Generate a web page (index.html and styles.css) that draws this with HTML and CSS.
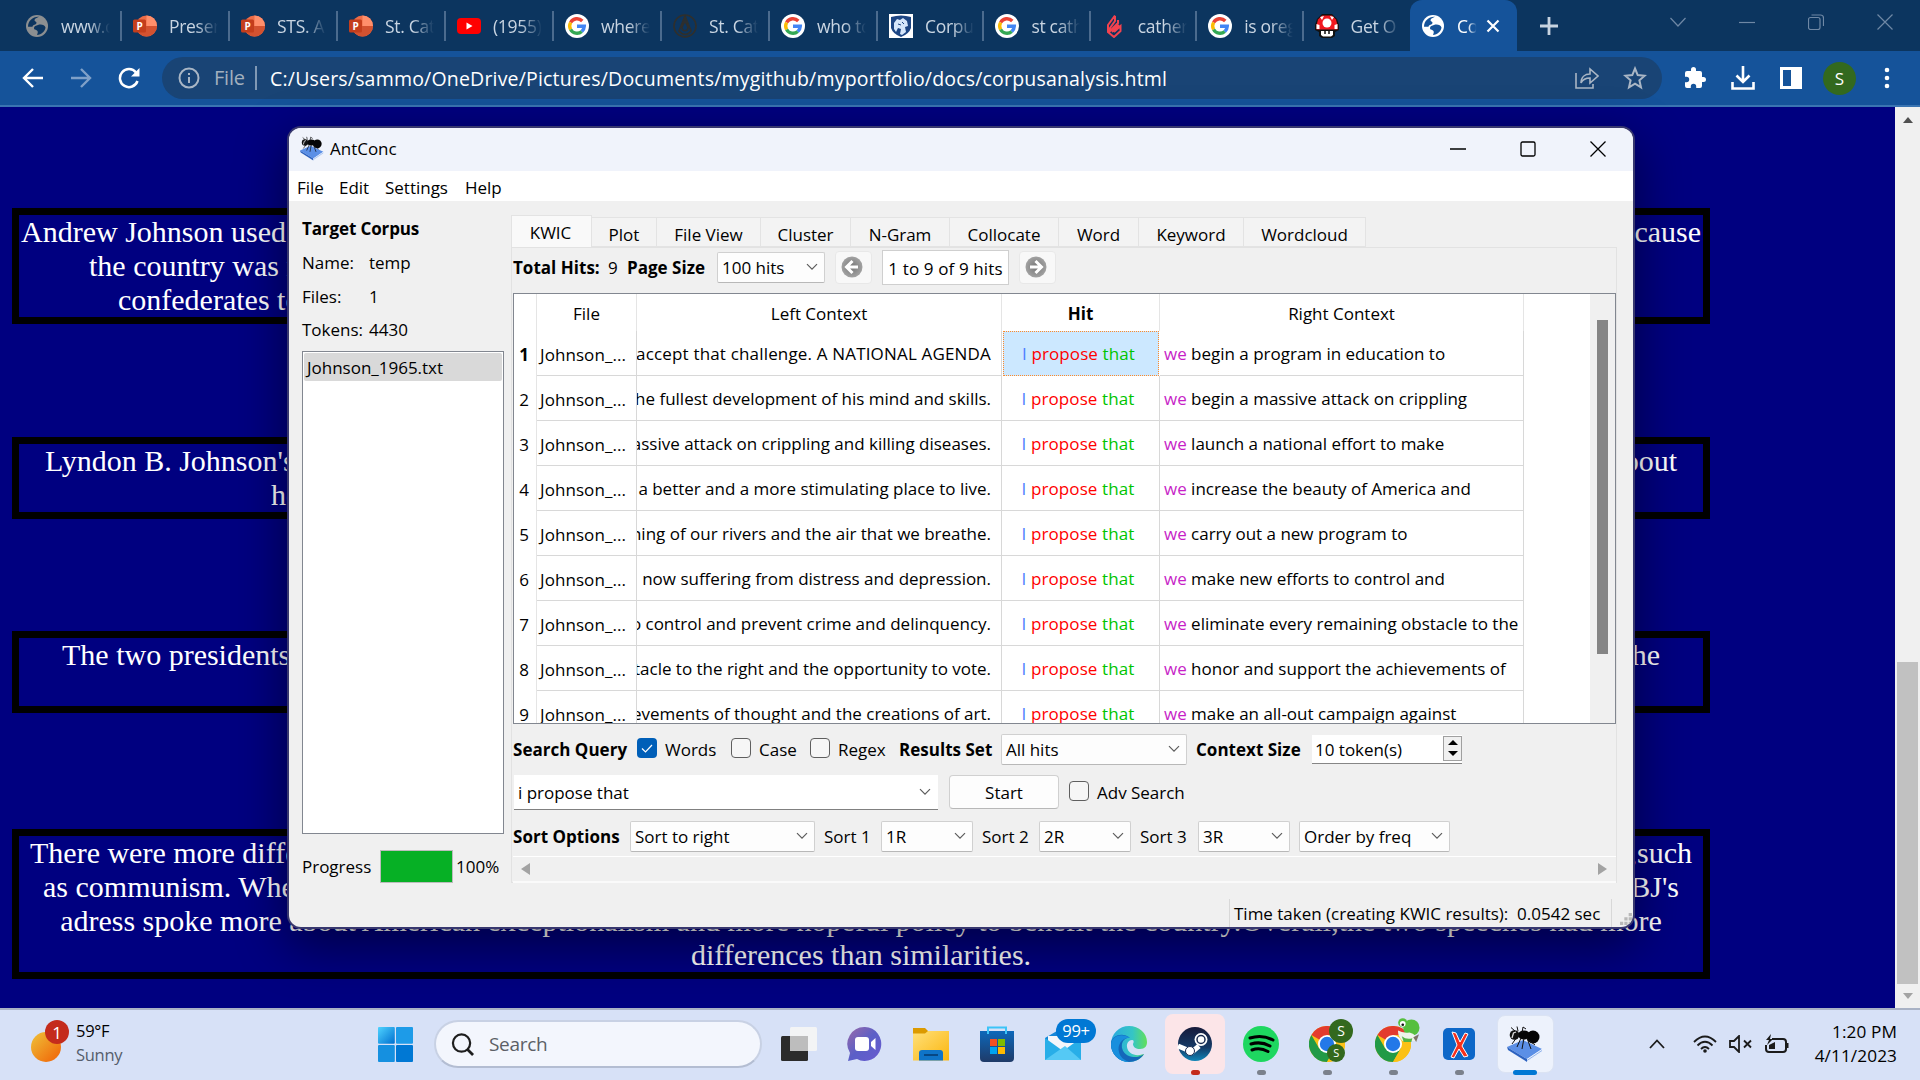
FILE: index.html
```html
<!DOCTYPE html>
<html lang="en">
<head>
<meta charset="utf-8">
<title>Corpus Analysis</title>
<link rel="stylesheet" href="styles.css">
</head>
<body>
<svg class="defs" width="0" height="0">
  <defs>
    <linearGradient id="gWin" x1="0" y1="0" x2="1" y2="1"><stop offset="0" stop-color="#4fd3ff"/><stop offset="1" stop-color="#0070d0"/></linearGradient>
    <linearGradient id="gSun" x1="0" y1="0" x2="1" y2="1"><stop offset="0" stop-color="#efc33a"/><stop offset=".8" stop-color="#f0730f"/></linearGradient>
    <linearGradient id="gChat" x1="0" y1="0" x2="1" y2="1"><stop offset="0" stop-color="#9a6aa8"/><stop offset=".5" stop-color="#5b5fc7"/><stop offset="1" stop-color="#6a5bd0"/></linearGradient>
    <linearGradient id="gFold" x1="0" y1="0" x2="1" y2="1"><stop offset="0" stop-color="#ffe07a"/><stop offset="1" stop-color="#fbb60e"/></linearGradient>
    <linearGradient id="gStore" x1="0" y1="0" x2="0" y2="1"><stop offset="0" stop-color="#0d68ba"/><stop offset="1" stop-color="#1f3a68"/></linearGradient>
    <linearGradient id="gEdge" x1="0" y1="0" x2="1" y2="0"><stop offset="0" stop-color="#2aa9e0"/><stop offset=".6" stop-color="#35c5c5"/><stop offset="1" stop-color="#62e05a"/></linearGradient>
    <linearGradient id="gSteam" x1="0" y1="0" x2="0" y2="1"><stop offset="0" stop-color="#171a3a"/><stop offset=".6" stop-color="#153a66"/><stop offset="1" stop-color="#0f86b8"/></linearGradient>
    <radialGradient id="gBall"><stop offset="0" stop-color="#777"/><stop offset="1" stop-color="#a2a2a2"/></radialGradient>
    <symbol id="ppt" viewBox="0 0 24 24"><circle cx="13.500" cy="12" r="10.500" fill="#ed6c47"/><path d="M13.500 1.500a10.500 10.500 0 0 1 10.500 10.500h-10.500z" fill="#ff8f6b"/><path d="M3 12a10.500 10.500 0 0 0 21 0z" fill="#d35230"/><rect y="5.500" width="13" height="13" rx="1.500" fill="#c43e1c"/><text x="3.500" y="16" class="ppt-p">P</text></symbol>
    <symbol id="google" viewBox="0 0 24 24"><circle cx="12" cy="12" r="12" fill="#fff"/><g fill="none" stroke-width="3.400"><path d="M17.300 7A7.300 7.300 0 0 0 5.600 8.500" stroke="#ea4335"/><path d="M5.600 8.500a7.300 7.300 0 0 0 0 7" stroke="#fbbc05"/><path d="M5.600 15.500a7.300 7.300 0 0 0 11.200 2" stroke="#34a853"/><path d="M16.800 17.500a7.300 7.300 0 0 0 2.500-5.200H12" stroke="#4285f4"/></g></symbol>
    <symbol id="globe" viewBox="0 0 24 24"><circle cx="12" cy="12" r="11" fill="currentColor"/><path d="M14 2.800c-2 1-4.500 1.500-4.500 3.500 0 1.500 2 1 2 2.500 0 2.500-4 1.500-4 4H3c0-6 5-10.500 11-10zM13 11c3-1 7 0 7.500 2.500-.5 4-4 7-8.500 7.500.5-2 1.500-3 0-4.500-1-1-3-.5-3-2.500 0-2 2-2.500 4-3z" fill="var(--cut)"/></symbol>
    <symbol id="chev" viewBox="0 0 12 8"><path d="M1 1.200l5 5 5-5" fill="none" stroke="#5c5c5c" stroke-width="1.200"/></symbol>
    <symbol id="chrome" viewBox="0 0 36 36"><circle cx="18" cy="18" r="18" fill="#fbc116"/><path d="M18 18L2.400 9A18 18 0 0 1 33.600 9H18z" fill="#e33b2e"/><path d="M18 18L10.200 22.500 2.400 9A18 18 0 0 0 18 36l7.800-13.500z" fill="#229a47"/><path d="M18 9h15.600A18 18 0 0 1 18 36l7.800-13.500z" fill="#fbc116"/><circle cx="18" cy="18" r="9" fill="#fff"/><circle cx="18" cy="18" r="7.200" fill="#2378e8"/></symbol>
    <symbol id="ant" viewBox="0 0 36 36"><path d="M0 21l16-7 19 9-15 10z" fill="#5b8fe6"/><path d="M0 21l20 12v3L1 24z" fill="#2c62c0"/><path d="M20 33l15-10v3L20 36z" fill="#e6eefc"/><path d="M20 34.500l15-10" stroke="#7fa4e4" stroke-width=".8"/><ellipse cx="26" cy="11" rx="6.500" ry="6.500" fill="#050505"/><ellipse cx="17" cy="9" rx="6" ry="4.500" fill="#050505"/><circle cx="7.500" cy="9" r="4.800" fill="#111"/><path d="M5 12l1.500-5 2.500-1" stroke="#ddd" fill="none" stroke-width="1.300"/><path d="M8 5L4 1.500M11 5l-1-4.500M14 12l-4 9M17 12l-2 11M20 12l4 11M19 12l9 7M10 11l-5 7M15 7l1-6 3 2" stroke="#111" stroke-width="1" fill="none"/></symbol>
  </defs>
</svg>

<main class="browser">
  <header class="tabstrip">
    <div class="tab first dim"><svg class="fav" style="--cut:#0c355f"><use href="#globe"/></svg><span>www.c</span></div>
    <div class="tab"><svg class="fav"><use href="#ppt"/></svg><span>Presen</span></div>
    <div class="tab"><svg class="fav"><use href="#ppt"/></svg><span>STS. A</span></div>
    <div class="tab"><svg class="fav"><use href="#ppt"/></svg><span>St. Cat</span></div>
    <div class="tab"><svg class="fav" viewBox="0 0 24 24"><rect y="4" width="24" height="16" rx="4" fill="#f00"/><path d="M9.500 8.500l6 3.500-6 3.500z" fill="#fff"/></svg><span>(1955)</span></div>
    <div class="tab"><svg class="fav"><use href="#google"/></svg><span>where</span></div>
    <div class="tab"><svg class="fav" viewBox="0 0 24 24" fill="none" stroke="#2f2f2c" stroke-width="1.600"><circle cx="12" cy="12" r="11"/><path d="M12 2L6 17c4 5 9 4 12 0L12 2v5l-3 6c0 5 6 5 6 0l-3-6"/></svg><span>St. Cat</span></div>
    <div class="tab"><svg class="fav"><use href="#google"/></svg><span>who to</span></div>
    <div class="tab"><svg class="fav" viewBox="0 0 24 24"><path fill="#fff" d="M0 0h24v24H0z"/><path d="M2 3q10-3 20 0v11q-2 6-10 9Q4 20 2 14z" fill="#1d4583"/><path d="M5 9l3-4 3 1 3-2 4 3 1 5-3 1 1 5-4 3-2-1 1-5-3-1-2 4-2-3z" fill="#d6e6fa"/><path d="M9 10l3 1M13 8l2 2" stroke="#1d4583"/></svg><span>Corpu</span></div>
    <div class="tab"><svg class="fav"><use href="#google"/></svg><span>st cath</span></div>
    <div class="tab"><svg class="fav" viewBox="0 0 24 24" fill="none" stroke="#f2434f" stroke-width="2"><path d="M13 1.500L6 11v7l6 5 6.500-6v-5L12 18M13 2v5l-5 7v3l8-8v-3M10 18l7-7"/></svg><span>cather</span></div>
    <div class="tab"><svg class="fav"><use href="#google"/></svg><span>is oreg</span></div>
    <div class="tab"><svg class="fav" viewBox="0 0 24 24"><path d="M7 0h10l5 5 2 6v5l-4 2v4l-3 2H7l-3-2v-4l-4-2v-5l2-6z" fill="#111"/><path d="M7 1.500h10l4 4 1.500 6v4H1.500v-4l1.500-6z" fill="#f01820"/><circle cx="12" cy="9" r="4.500" fill="#fff"/><path d="M5 3l4-1-2 4zM19 3l-4-1 2 4zM1.500 10l3 1v4h-3zM22.500 10l-3 1v4h3zM6 17h12v4l-2 1.500H8L6 21z" fill="#fff"/><path d="M10 17v3M14 17v3" stroke="#111" stroke-width="1.500"/></svg><span>Get O</span></div>
    <div class="tab active"><svg class="fav" style="--cut:#15539a"><use href="#globe"/></svg><span>Co</span><svg class="x" viewBox="0 0 14 14"><path d="M1.500 1.500l11 11M12.500 1.500l-11 11" stroke="#fff" stroke-width="2.200"/></svg></div>
    <svg class="plus" viewBox="0 0 18 18"><path d="M9 0v18M0 9h18" stroke="#c7d3e0" stroke-width="2.800"/></svg>
    <div class="syscontrols">
      <svg viewBox="0 0 16 16"><path d="M.5 4l7.500 8 7.500-8" /></svg>
      <svg viewBox="0 0 16 16"><path d="M0 8.500h16"/></svg>
      <svg viewBox="0 0 16 16"><rect x=".5" y="3.500" width="11.500" height="12" rx="2"/><path d="M3.500 1h9q3 0 3 3v8"/></svg>
      <svg viewBox="0 0 16 16"><path d="M.5.5l15 15M15.500.5l-15 15"/></svg>
    </div>
  </header>

  <nav class="toolbar">
    <svg class="nav" viewBox="0 0 22 22"><path d="M21 11H2.500M11 2l-9 9 9 9" stroke="#fff"/></svg>
    <svg class="nav" viewBox="0 0 22 22"><path d="M1 11h18.500M11 2l9 9-9 9" stroke="#7fa0c8"/></svg>
    <svg class="nav reload" viewBox="0 0 22 22"><path d="M19.500 14a9 9 0 1 1-1.500-8.500" stroke="#fff" stroke-width="2.500"/><path d="M21.500 1v8.500h-8.500z" fill="#fff" stroke="none"/></svg>
    <div class="omnibox">
      <svg class="info" viewBox="0 0 22 22"><circle cx="11" cy="11" r="9.500"/><path d="M11 10v6M11 6v2"/></svg>
      <span class="scheme">File</span>
      <span class="url">C:/Users/sammo/OneDrive/Pictures/Documents/mygithub/myportfolio/docs/corpusanalysis.html</span>
      <svg class="share" viewBox="0 0 24 24"><path d="M1 7v15h17v-4M6 17c0-6 4-9 9-9V3l8 7-8 7v-5c-4 0-7 1-9 5z"/></svg>
      <svg class="star" viewBox="0 0 24 24"><path d="M12 2.500l2.700 6.600 7 .6-5.300 4.600 1.600 7-6-3.700-6 3.700 1.600-7-5.300-4.600 7-.6z"/></svg>
    </div>
    <svg class="act a1" viewBox="0 0 24 24"><path d="M20.500 11H19V7a2 2 0 0 0-2-2h-4V3.500a2.500 2.500 0 0 0-5 0V5H4a2 2 0 0 0-2 2v3.800h1.500a2.700 2.700 0 0 1 0 5.400H2V20a2 2 0 0 0 2 2h3.800v-1.500a2.700 2.700 0 0 1 5.400 0V22H17a2 2 0 0 0 2-2v-4h1.500a2.500 2.500 0 0 0 0-5z" fill="#fff"/></svg>
    <svg class="act a2" viewBox="0 0 24 24"><path d="M12 0v16M5.500 9.500L12 16l6.500-6.500M1.500 16v6.500h21V16" fill="none" stroke="#fff" stroke-width="2.600"/></svg>
    <svg class="act a3" viewBox="0 0 24 24"><path d="M1 1h22v22H1zM4 4v16h8V4z" fill="#fff" fill-rule="evenodd"/></svg>
    <span class="avatar">S</span>
    <svg class="dots" viewBox="0 0 6 22"><circle cx="3" cy="3" r="2.300"/><circle cx="3" cy="11" r="2.300"/><circle cx="3" cy="19" r="2.300"/></svg>
  </nav>

  <div class="viewport">
    <article class="page">
      <section class="box b1">
        <p class="l1"><span>Andrew Johnson used</span><span>because</span></p>
        <p class="l2"><span>the country was r</span></p>
        <p class="l3"><span>confederates to</span></p>
      </section>
      <section class="box b2">
        <p class="l4"><span>Lyndon B. Johnson's</span><span>about</span></p>
        <p class="l5"><span>he</span></p>
      </section>
      <section class="box b3">
        <p class="l6"><span>The two presidents</span><span>the</span></p>
        <p></p>
      </section>
      <section class="box b4">
        <p class="l7"><span>There were more diffe</span><span>,such</span></p>
        <p class="l8"><span>as communism. Whe</span><span>LBJ's</span></p>
        <p class="l9"><span>adress spoke more about American exceptionalism and more hopeful policy to benefit the country.Overall,the two speeches had more</span></p>
        <p class="l10"><span>differences than similarities.</span></p>
      </section>
    </article>
    <aside class="vscroll"><i class="up"></i><b></b><i class="down"></i></aside>
  </div>
</main>

<section class="window">
  <header class="titlebar">
    <svg class="appicon"><use href="#ant"/></svg>
    <span>AntConc</span>
    <div class="wctl">
      <svg viewBox="0 0 16 16"><path d="M0 8h16"/></svg>
      <svg viewBox="0 0 16 16"><rect x="1" y="1" width="14" height="14" rx="1.500"/></svg>
      <svg viewBox="0 0 16 16"><path d="M.5.500l15 15M15.500.5l-15 15"/></svg>
    </div>
  </header>
  <nav class="menubar"><span>File</span><span>Edit</span><span>Settings</span><span>Help</span></nav>
  <div class="content">
    <aside class="corpus">
      <strong>Target Corpus</strong>
      <dl><dt>Name:</dt><dd>temp</dd><dt>Files:</dt><dd>1</dd><dt>Tokens:</dt><dd>4430</dd></dl>
      <div class="filelist"><div>Johnson_1965.txt</div></div>
      <div class="progress"><span>Progress</span><i></i><span>100%</span></div>
    </aside>
    <div class="work">
      <div class="tabs"><span class="on">KWIC</span><span>Plot</span><span>File View</span><span>Cluster</span><span>N-Gram</span><span>Collocate</span><span>Word</span><span>Keyword</span><span>Wordcloud</span></div>
      <div class="panel">
        <div class="pager">
          <strong>Total Hits:</strong><span>9</span><strong>Page Size</strong>
          <div class="select">100 hits<svg><use href="#chev"/></svg></div>
          <div class="arrow"><svg viewBox="0 0 22 22"><circle cx="11" cy="11" r="10.500" fill="url(#gBall)"/><path d="M11.500 5l-6 6 6 6M6 11h11" stroke="#fff" stroke-width="3" fill="none"/></svg></div>
          <div class="range">1 to 9 of 9 hits</div>
          <div class="arrow"><svg viewBox="0 0 22 22"><circle cx="11" cy="11" r="10.500" fill="url(#gBall)"/><path d="M10.500 5l6 6-6 6M16 11H5" stroke="#fff" stroke-width="3" fill="none"/></svg></div>
        </div>
        <div class="results">
          <div class="grid">
            <div class="row head"><span></span><span>File</span><span>Left Context</span><strong>Hit</strong><span>Right Context</span></div>
            <div class="row"><b class="n">1</b><span class="f">Johnson_...</span><span class="lc caps">accept that challenge. A NATIONAL AGENDA</span><span class="hit sel"><i>I</i> <em>propose</em> <u>that</u></span><span class="rc"><q>we</q> begin a program in education to</span></div>
            <div class="row"><span class="n">2</span><span class="f">Johnson_...</span><span class="lc">the fullest development of his mind and skills.</span><span class="hit"><i>I</i> <em>propose</em> <u>that</u></span><span class="rc"><q>we</q> begin a massive attack on crippling</span></div>
            <div class="row"><span class="n">3</span><span class="f">Johnson_...</span><span class="lc">massive attack on crippling and killing diseases.</span><span class="hit"><i>I</i> <em>propose</em> <u>that</u></span><span class="rc"><q>we</q> launch a national effort to make</span></div>
            <div class="row"><span class="n">4</span><span class="f">Johnson_...</span><span class="lc">a better and a more stimulating place to live.</span><span class="hit"><i>I</i> <em>propose</em> <u>that</u></span><span class="rc"><q>we</q> increase the beauty of America and</span></div>
            <div class="row"><span class="n">5</span><span class="f">Johnson_...</span><span class="lc">poisoning of our rivers and the air that we breathe.</span><span class="hit"><i>I</i> <em>propose</em> <u>that</u></span><span class="rc"><q>we</q> carry out a new program to</span></div>
            <div class="row"><span class="n">6</span><span class="f">Johnson_...</span><span class="lc">now suffering from distress and depression.</span><span class="hit"><i>I</i> <em>propose</em> <u>that</u></span><span class="rc"><q>we</q> make new efforts to control and</span></div>
            <div class="row"><span class="n">7</span><span class="f">Johnson_...</span><span class="lc">to control and prevent crime and delinquency.</span><span class="hit"><i>I</i> <em>propose</em> <u>that</u></span><span class="rc"><q>we</q> eliminate every remaining obstacle to the</span></div>
            <div class="row"><span class="n">8</span><span class="f">Johnson_...</span><span class="lc">obstacle to the right and the opportunity to vote.</span><span class="hit"><i>I</i> <em>propose</em> <u>that</u></span><span class="rc"><q>we</q> honor and support the achievements of</span></div>
            <div class="row"><span class="n">9</span><span class="f">Johnson_...</span><span class="lc">achievements of thought and the creations of art.</span><span class="hit"><i>I</i> <em>propose</em> <u>that</u></span><span class="rc"><q>we</q> make an all-out campaign against</span></div>
          </div>
          <div class="tscroll"><b></b></div>
        </div>
        <div class="query">
          <strong>Search Query</strong>
          <svg class="cb" viewBox="0 0 20 20"><rect width="20" height="20" rx="4" fill="#005fb8"/><path d="M5 10.500l3.500 3.500L15 7" fill="none" stroke="#fff" stroke-width="1.200"/></svg><span>Words</span>
          <i class="cb off"></i><span>Case</span>
          <i class="cb off"></i><span>Regex</span>
          <strong>Results Set</strong>
          <div class="select">All hits<svg><use href="#chev"/></svg></div>
          <strong>Context Size</strong>
          <div class="spin">10 token(s)<div class="steps"><i class="su"></i><i class="sd"></i></div></div>
        </div>
        <div class="search">
          <div class="combo">i propose that<svg><use href="#chev"/></svg></div>
          <div class="start">Start</div>
          <i class="cb off"></i><span>Adv Search</span>
        </div>
        <div class="sort">
          <strong>Sort Options</strong><div class="select">Sort to right<svg><use href="#chev"/></svg></div>
          <span>Sort 1</span><div class="select">1R<svg><use href="#chev"/></svg></div>
          <span>Sort 2</span><div class="select">2R<svg><use href="#chev"/></svg></div>
          <span>Sort 3</span><div class="select">3R<svg><use href="#chev"/></svg></div>
          <div class="select">Order by freq<svg><use href="#chev"/></svg></div>
        </div>
        <div class="hscroll"><i class="lt"></i><i class="rt"></i></div>
      </div>
    </div>
  </div>
  <footer class="status"><span>Time taken (creating KWIC results):&nbsp; 0.0542 sec</span>
    <svg class="grip" viewBox="0 0 12 12" fill="#b8b8b8"><path d="M8 0h3v3H8zM4 4h3v3H4zM8 4h3v3H8zM0 8h3v3H0zM4 8h3v3H4zM8 8h3v3H8z"/></svg></footer>
</section>

<footer class="taskbar">
  <div class="weather">
    <svg viewBox="0 0 40 44"><circle cx="16" cy="28" r="15" fill="url(#gSun)"/><circle cx="27" cy="13" r="12" fill="#c42b1c"/><text x="27" y="19.500" class="badge-n">1</text></svg>
    <div><p>59°F</p><p class="muted">Sunny</p></div>
  </div>
  <svg class="start-logo" viewBox="0 0 35 35" fill="url(#gWin)"><rect width="16.800" height="16.800" rx="1"/><rect x="18" width="17" height="16.800" rx="1" fill="#1d9be8"/><rect y="18" width="16.800" height="17" rx="1" fill="#1590e0"/><rect x="18" y="18" width="17" height="17" rx="1" fill="#0078d4"/></svg>
  <div class="searchbox"><svg viewBox="0 0 24 24"><circle cx="11" cy="10.500" r="9" fill="none" stroke="#1e1e1e" stroke-width="2.300"/><path d="M17 17l6 6" stroke="#1e1e1e" stroke-width="2.800"/></svg>Search</div>
  <div class="apps">
    <div class="slot"><svg viewBox="0 0 36 36"><rect y="10" width="27" height="25" rx="1.500" fill="#2b2b2b"/><rect x="9" y="1" width="27" height="24" rx="1.500" fill="#f4f4f4" opacity=".95"/><path d="M9 10h18v15H9z" fill="#bdbdbd"/></svg></div>
    <div class="slot"><svg viewBox="0 0 36 36"><path d="M18 1a16.500 17 0 1 1-8 32l-9 2 2-8A17 17 0 0 1 18 1z" fill="url(#gChat)"/><rect x="8" y="11" width="14" height="14" rx="3" fill="#fff"/><path d="M24 16l4.500-4v12L24 20z" fill="#fff"/></svg></div>
    <div class="slot"><svg viewBox="0 0 36 36"><path d="M0 2h12l4 4-4 5H0z" fill="#dc9a00"/><path d="M0 7.500h12l3-2.500h21v29.500H0z" fill="url(#gFold)"/><path d="M6 34.500V27q0-3 3-3h18q3 0 3 3v7.500z" fill="#0f74c8"/><path d="M11 29h14" stroke="#07427c" stroke-width="1.800"/></svg></div>
    <div class="slot"><svg viewBox="0 0 36 36"><path d="M1 5h34v27q0 4-4 4H5q-4 0-4-4z" fill="url(#gStore)"/><path d="M9 8V1.500h18V8" fill="none" stroke="#3cc4f8" stroke-width="2"/><path d="M11 13h7v7h-7z" fill="#f25022"/><path d="M19 13h7v7h-7z" fill="#7fba00"/><path d="M11 21h7v7h-7z" fill="#00a4ef"/><path d="M19 21h7v7h-7z" fill="#ffb900"/></svg></div>
    <div class="slot"><svg viewBox="0 0 36 36"><path d="M0 12L17 2l19 10v22H0z" fill="#1687d9"/><path d="M3 10h30v9L18 27 3 16z" fill="#f4f6fa"/><path d="M0 12l18 13L36 12v22H0z" fill="#28aee8"/><path d="M0 34l20-14 16 14z" fill="#55c9f5"/></svg><span class="count">99+</span></div>
    <div class="slot"><svg viewBox="0 0 36 36"><path d="M18 0a18 18 0 0 0 0 36c7 0 13-4 15-8-8 3-16 0-17-7-.5-4 2-7 5-7 2 0 2 2 1 4 0 3 3 5 7 5 5 0 7-3 7-7C36 7 28 0 18 0z" fill="url(#gEdge)"/><path d="M0 17c1-8 12-11 19-5-5-1-9 4-8 10 2 8 9 9 13 9 5 0 7-2 9-3-3 5-9 8-15 8A18 18 0 0 1 0 17z" fill="#1468ba"/><path d="M19 12c-8-1-13 7-11 14 1 5 5 8 10 10A18 18 0 0 1 0 18C1 9 12 7 19 12z" fill="#198fdd"/></svg></div>
    <div class="slot"><div class="tile steam"><svg viewBox="0 0 36 36"><circle cx="18" cy="18" r="17" fill="url(#gSteam)"/><path d="M1 20l12 5 2 1 7-6" fill="none" stroke="#fff" stroke-width="5"/><circle cx="24" cy="13.500" r="6.500" fill="#fff"/><circle cx="24" cy="13.500" r="4" fill="#fff" stroke="#1b2d52" stroke-width="1.500"/><circle cx="13" cy="25" r="4.500" fill="#fff" stroke="#1b2d52"/></svg></div><i class="mark red"></i></div>
    <div class="slot"><svg viewBox="0 0 36 36"><circle cx="18" cy="18" r="18" fill="#1ed760"/><path d="M7 12q12-4 23 2M8 18q10-3 19 2M9 24q8-3 16 1.500" fill="none" stroke="#000" stroke-width="3" stroke-linecap="round"/></svg><i class="mark"></i></div>
    <div class="slot"><svg viewBox="0 0 36 36"><use href="#chrome"/></svg><span class="who big">S</span><span class="who small">S</span><i class="mark"></i></div>
    <div class="slot"><svg viewBox="0 0 36 36"><use href="#chrome"/></svg><svg class="yoshi" viewBox="0 0 24 26"><circle cx="15" cy="10" r="8.500" fill="#55bf3e"/><circle cx="6" cy="5" r="4.800" fill="#55bf3e"/><path d="M1 13q5 3 12 2 8 2 8 9H6Q1 20 1 13z" fill="#eef3ea"/><path d="M5 19q5 4 11 2l-1 4H7z" fill="#56b544"/><circle cx="6" cy="6" r="3" fill="#fff"/><circle cx="6" cy="7" r="1.400" fill="#111"/><path d="M17 20l6-3-3 8z" fill="#7d7466"/></svg><i class="mark"></i></div>
    <div class="slot"><svg viewBox="0 0 36 36"><rect x="2" y="2" width="32" height="32" rx="5" fill="#0d67c8"/><path d="M11 6l4 1 4 9 5-9 3 1-6 12 6 10-4 1-5-8-5 9-3-1 6-12z" fill="#f8301c" stroke="#fff"/></svg><i class="mark"></i></div>
    <div class="slot"><div class="tile antt"><svg viewBox="0 0 36 36"><use href="#ant"/></svg></div><i class="mark wide"></i></div>
  </div>
  <div class="tray">
    <svg class="t1" viewBox="0 0 16 10"><path d="M1 9l7-7.500L15 9"/></svg>
    <svg class="t2" viewBox="0 0 24 18"><path d="M1 7q11-11 22 0M4.500 10.500q7.500-7.500 15 0M8 14q4-4 8 0"/><circle cx="12" cy="16" r="1.800" fill="#1b1b1b" stroke="none"/></svg>
    <svg class="t3" viewBox="0 0 24 18"><path d="M1 6h4l5-5v16l-5-5H1zM15 5.500l7 7M22 5.500l-7 7"/></svg>
    <svg class="t4" viewBox="0 0 24 20"><path d="M7 5h11q3 0 3 3v7q0 3-3 3H4q-3 0-3-3v-4M22.500 9v5" stroke-width="2"/><path d="M10 8v7H4v-4zM6 0L1 6h3L2 11l6-6H5z" fill="#1b1b1b" stroke="none"/></svg>
    <div class="clock"><p>1:20 PM</p><p>4/11/2023</p></div>
  </div>
</footer>
</body>
</html>
```
FILE: styles.css
```css
* { box-sizing: border-box; }
html, body { margin: 0; width: 1920px; height: 1080px; overflow: hidden; }
body { display: flex; flex-direction: column; background: #000080; font-family: "Open Sans", "Noto Sans", sans-serif; font-size: 17px; color: #000; }
p, dl, dd { margin: 0; }
svg { display: block; flex: none; }
.defs { position: absolute; }
.browser { height: 1008px; display: flex; flex-direction: column; }

/* tab strip */
.tabstrip { height: 51px; background: #0c355f; display: flex; align-items: center; flex: none; padding-left: 14px; }
.tab { width: 108px; height: 30px; display: flex; align-items: center; border-right: 2px solid #4b6b8e; padding-left: 11px; color: #c9d5e2; white-space: nowrap; flex: none; font-size: 17.500px; letter-spacing: -.3px; }
.tab:nth-child(n+9) { width: 106.400px; }
.tab:nth-child(13) { border-right-color: transparent; }
.fav { width: 24px; height: 24px; margin-right: 12px; }
.dim .fav { color: #8c8f91; }
.tab span { width: 50px; overflow: hidden; -webkit-mask-image: linear-gradient(90deg, #000 55%, transparent 98%); mask-image: linear-gradient(90deg, #000 55%, transparent 98%); }
.tabstrip .active { width: 107px; height: 51px; background: #15539a; border: 0; border-radius: 12px 12px 0 0; color: #fff; padding-left: 11px; }
.active span { width: 20px; margin-right: 9px; }
.active .fav { color: #fff; }
.x { width: 14px; height: 14px; }
.plus { width: 18px; height: 18px; margin-left: 23px; }
.ppt-p { font: bold 10px "Open Sans", sans-serif; fill: #fff; }
.syscontrols { display: flex; gap: 53px; margin-left: auto; margin-right: 27px; margin-bottom: 8px; }
.syscontrols svg { width: 16px; height: 16px; fill: none; stroke: #6f88a5; stroke-width: 1.200; }

/* toolbar */
.toolbar { height: 56px; background: #15539a; border-bottom: 2px solid #3a74b2; display: flex; align-items: center; flex: none; padding: 0 0 0 22px; }
.nav { width: 22px; height: 22px; fill: none; stroke-width: 2.400; margin-right: 26px; }
.reload { margin-right: 22px; }
.omnibox { width: 1500px; height: 42px; border-radius: 21px; background: #194475; display: flex; align-items: center; padding: 0 15px 0 16px; }
.omnibox svg { fill: none; stroke: #a9b6c5; stroke-width: 2; }
.info { width: 22px; height: 22px; }
.scheme { width: 44px; height: 24px; line-height: 24px; color: #a2b0bf; font-size: 20px; letter-spacing: -.2px; margin-left: 13px; padding-left: 1px; border-right: 2px solid #8099b5; }
.url { margin-left: 13px; color: #fff; font-size: 19.500px; letter-spacing: .19px; white-space: nowrap; }
.share { width: 24px; height: 24px; margin-left: auto; stroke-width: 1.600 !important; }
.star { width: 24px; height: 24px; margin-left: 24px; }
.act { width: 24px; height: 24px; }
.a1 { margin-left: 21px; } .a2 { margin-left: 24px; } .a3 { margin-left: 24px; }
.avatar { width: 33px; height: 33px; border-radius: 50%; background: #33691e; color: #fff; font-size: 17px; text-align: center; line-height: 33px; margin-left: 20px; }
.dots { width: 6px; height: 22px; fill: #fff; margin-left: 28px; }

/* page */
.viewport { flex: 1; display: flex; overflow: hidden; }
.page { width: 1895px; padding: 101px 0 0 12px; font-family: "Liberation Serif", serif; font-size: 30px; color: #fff; }
.box { width: 1698px; border: 7px solid #000; }
.b2 { margin-top: 113px; } .b3 { margin-top: 112px; } .b4 { margin-top: 116px; }
.box p { height: 34px; line-height: 34px; display: flex; justify-content: space-between; white-space: nowrap; }
.box .l1 { padding: 0 2px; } .box .l2 { padding-left: 70px; } .box .l3 { padding-left: 99px; }
.box .l4 { padding: 0 26px; } .box .l5 { padding-left: 252px; } .box .l6 { padding: 0 43px; }
.box .l7 { padding: 0 11px; } .box .l8 { padding: 0 24px; }
.box .l9, .box .l10 { justify-content: center; }
.vscroll { width: 25px; background: #f0f0f0; display: flex; flex-direction: column; align-items: center; }
.vscroll b { width: 21px; height: 322px; background: #c1c1c1; margin-top: 539px; }
.up { margin-top: 10px; border: 5.500px solid transparent; border-top: 0; border-bottom: 6px solid #505050; }
.down { margin-top: 9px; border: 5.500px solid transparent; border-bottom: 0; border-top: 6px solid #a3a3a3; }

/* application window */
.window { position: absolute; left: 289px; top: 128px; width: 1344px; height: 799px; background: #f0f0f0; border-radius: 12px; display: flex; flex-direction: column; box-shadow: 0 0 0 2px #38386f, 0 16px 50px 4px rgba(0,0,0,.45); overflow: hidden; letter-spacing: -.01px; white-space: nowrap; }
.titlebar { height: 43px; background: #f0f3fb; display: flex; align-items: center; padding: 0 27px 2px 11px; flex: none; }
.appicon { width: 24px; height: 25px; margin-right: 6px; }
.wctl { margin-left: auto; display: flex; gap: 54px; }
.wctl svg { width: 16px; height: 16px; fill: none; stroke: #000; stroke-width: 1.300; }
.menubar { height: 30px; background: #fff; display: flex; align-items: center; padding: 2px 0 0 8px; flex: none; }
.menubar span:nth-child(1) { width: 42px; } .menubar span:nth-child(2) { width: 46px; } .menubar span:nth-child(3) { width: 80px; }
.content { height: 682px; display: flex; flex: none; }
.corpus { width: 222px; padding: 11px 0 0 13px; display: flex; flex-direction: column; }
strong { font-weight: 700; letter-spacing: .02px; }
.corpus > strong { height: 34px; line-height: 34px; }
.corpus > strong { letter-spacing: -.12px; }
.corpus dl { display: grid; grid-template-columns: 67px 1fr; grid-auto-rows: 33.700px; line-height: 33px; }
.filelist { width: 202px; height: 486px; margin-top: 4px; border: 1px solid #828790; background: #fff; padding: 1px; }
.filelist div { height: 28px; line-height: 29px; background: #d9d9d9; padding-left: 3px; border-radius: 2px; }
.progress { display: flex; align-items: center; height: 34px; margin-top: 15px; }
.progress span:first-child { width: 78px; }
.progress i { width: 73px; height: 33px; background: #06b025; border: 1px solid #bcbcbc; margin-right: 3px; }
.work { padding: 15px 0 0 0; width: 1106px; }
.tabs { display: flex; height: 31px; align-items: flex-end; position: relative; }
.tabs span { height: 30px; line-height: 34px; text-align: center; background: #f3f3f3; border: 1px solid #e3e3e3; border-left: 0; }
.tabs .on { height: 32px; line-height: 34px; background: #f9f9f9; border-left: 1px solid #e3e3e3; border-bottom: 0; padding-right: 2px; }
.tabs span:nth-child(1) { width: 81px; } .tabs span:nth-child(2) { width: 65px; } .tabs span:nth-child(3) { width: 104px; } .tabs span:nth-child(4) { width: 90px; } .tabs span:nth-child(5) { width: 99px; } .tabs span:nth-child(6) { width: 109px; } .tabs span:nth-child(7) { width: 80px; } .tabs span:nth-child(8) { width: 105px; } .tabs span:nth-child(9) { width: 122px; }
.panel { height: 636px; border: 1px solid #e2e2e2; padding: 1px 0 0 1px; }
.pager { display: grid; grid-template-columns: 95px 19px 90px 108px 47px 137px 47px; height: 36px; align-items: center; }
.pager .select { width: 108px; }
.pager .arrow, .pager .range { margin-left: 10px; }
.select { height: 31px; background: #fdfdfd; border: 1px solid #d0d0d0; border-bottom-color: #b8b8b8; border-radius: 2px; display: flex; align-items: center; justify-content: space-between; padding: 1px 6px 0 4px; }
.select svg, .combo svg { width: 12px; height: 8px; margin-bottom: 2px; }
.arrow { height: 33px; width: 37px; background: #f8f8f8; border: 1px solid #e8e8e8; border-radius: 4px; padding: 4px 0 0 5px; }
.arrow svg { width: 22px; height: 22px; }
.range { height: 35px; width: 127px; background: #fff; border: 1px solid #cfcfcf; line-height: 36px; text-align: center; letter-spacing: .12px; }
.results { height: 431px; margin-top: 8px; border: 1px solid #828790; background: #fff; display: flex; overflow: hidden; }
.grid { width: 1076px; height: 429px; overflow: hidden; }
.row { display: grid; grid-template-columns: 23px 100px 365px 158px 364px; height: 45px; }
.row > * { border-right: 1px solid #d8d8d8; border-bottom: 1px solid #d8d8d8; line-height: 44px; overflow: hidden; }
.head { height: 37px; }
.head > * { text-align: center; line-height: 40px; border-bottom: 0; border-color: #e5e5e5; }
.row .n { border-bottom: 0; text-align: center; line-height: 48px; border-color: #e5e5e5; padding-right: 2px; }
.f { padding-left: 3px; line-height: 48px !important; letter-spacing: .07px; }
.lc { display: flex; justify-content: flex-end; padding-right: 10px; line-height: 46px !important; }
.caps { letter-spacing: .17px; }
.hit { text-align: center; padding-right: 5px; line-height: 46px !important; letter-spacing: .1px; }
.sel { background: #cce8ff; margin: 0 1px 0; border: 1px dotted #ff8a2a !important; line-height: 44px !important; padding-right: 5px; }
.hit i { font-style: normal; color: #4c7dff; } .hit em { font-style: normal; color: #f00; } .hit u { text-decoration: none; color: #00c400; }
.rc { padding-left: 4px; line-height: 46px !important; }
.rc q { quotes: none; color: #c71fc7; }
.tscroll { width: 25px; background: #f0f0f0; margin-left: auto; padding: 26px 0 0 7px; }
.tscroll b { display: block; width: 11px; height: 334px; background: #858585; }
.cb { width: 20px; height: 20px; margin-bottom: 3px; }
.off { display: block; border: 1.500px solid #5f5f5f; border-radius: 4px; background: #f6f6f6; }
.query { display: grid; grid-template-columns: 124px 28px 66px 28px 51px 28px 61px 102px 186px 9px 116px 150px; height: 48px; align-items: center; padding-top: 2px; }
.query strong:nth-of-type(3) { grid-column: 11; }
.query .spin { grid-column: 12; }
.spin { height: 29px; background: #fff; border-bottom: 1px solid #868686; padding-left: 3px; display: flex; justify-content: space-between; line-height: 30px; }
.steps { width: 19px; height: 25px; margin: 1px 0; background: #f0f0f0; border: 1px solid #a0a0a0; display: flex; flex-direction: column; justify-content: space-around; align-items: center; }
.su { border: 5px solid transparent; border-top: 0; border-bottom: 5px solid #000; }
.sd { border: 5px solid transparent; border-bottom: 0; border-top: 5px solid #000; }
.search { display: flex; height: 39px; align-items: center; padding: 1px 0 0 1px; }
.combo { width: 424px; height: 35px; background: #fff; border-bottom: 1px solid #808080; display: flex; align-items: center; justify-content: space-between; padding: 2px 7px 0 4px; }
.start { width: 110px; height: 34px; margin: 0 10px 0 11px; background: #fdfdfd; border: 1px solid #d0d0d0; border-bottom-color: #b8b8b8; border-radius: 4px; text-align: center; line-height: 34px; }
.search .cb { margin-right: 8px; }
.sort { display: grid; grid-template-columns: 117px 185px 9px 57px 92px 9px 57px 92px 9px 58px 92px 9px 151px; height: 45px; align-items: center; padding-top: 5px; }
.sort span:nth-of-type(1) { grid-column: 4; } .sort span:nth-of-type(2) { grid-column: 7; } .sort span:nth-of-type(3) { grid-column: 10; }
.sort .select:last-child { grid-column: 13; }
.hscroll { height: 27px; border-top: 1px solid #fff; border-bottom: 2px solid #fafafa; display: flex; justify-content: space-between; align-items: center; padding: 0 9px 0 8px; }
.lt { border: 6px solid transparent; border-left: 0; border-right: 9px solid #a3a3a3; }
.rt { border: 6px solid transparent; border-right: 0; border-left: 9px solid #a3a3a3; }
.status { flex: 1; display: flex; justify-content: flex-end; padding: 16px 0 2px; }
.status span { width: 383px; border: 1px solid #d8d8d8; border-width: 0 1px; padding-left: 4px; line-height: 30px; }
.grip { width: 13px; height: 13px; margin: 14px 0 0 8px; }

/* taskbar */
.taskbar { height: 72px; background: #d7e1f7; border-top: 2px solid #a9b2c5; display: flex; align-items: center; flex: none; font-size: 16.500px; letter-spacing: -.3px; padding-bottom: 2px; }
.weather { width: 378px; display: flex; padding-left: 30px; }
.weather svg { width: 40px; height: 44px; margin: -2px 6px 0 0; }
.weather p, .clock p { line-height: 24px; }
.weather div { margin-top: -2px; }
.muted { color: #555d6b; }
.badge-n { font: 17px "Open Sans", sans-serif; fill: #fff; text-anchor: middle; }
.start-logo { width: 35px; height: 35px; margin-right: 21px; }
.searchbox { width: 328px; height: 48px; border-radius: 24px; background: #f3f6fd; border: 2px solid #c8d1e4; border-bottom-color: #b3bdd2; display: flex; align-items: center; color: #5c5f66; font-size: 19px; padding-left: 15px; }
.searchbox svg { width: 23px; height: 23px; margin-right: 15px; }
.apps { display: flex; margin-left: 4px; }
.slot { width: 66px; height: 70px; display: flex; align-items: center; justify-content: center; position: relative; }
.slot svg { width: 36px; height: 36px; }
.tile { width: 60px; height: 60px; border-radius: 8px; display: flex; align-items: center; justify-content: center; }
.steam { background: #fce5e8; }
.antt { width: 57px; height: 58px; background: #edf2fc; border: 1px solid #dbe3f3; }
.mark { position: absolute; bottom: 4px; left: 28.500px; width: 9px; height: 5px; border-radius: 3px; background: #7b818c; }
.mark.red { background: #c42b1c; }
.mark.wide { width: 24px; left: 21px; background: #0078d4; }
.count { position: absolute; left: 26px; top: 10px; width: 40px; height: 24px; border-radius: 12px; background: #0078d4; color: #fff; text-align: center; line-height: 24px; }
.who { position: absolute; border-radius: 50%; background: #33691e; color: #fff; text-align: center; }
.big { left: 35px; top: 10px; width: 24px; height: 24px; line-height: 24px; font-size: 14px; }
.small { left: 33px; top: 35px; width: 18px; height: 18px; line-height: 18px; font-size: 11px; }
.slot .yoshi { position: absolute; left: 37px; top: 9px; width: 23px; height: 25px; }
.tray { margin-left: auto; display: flex; align-items: center; padding-right: 23px; }
.tray svg { fill: none; stroke: #1b1b1b; stroke-width: 1.800; }
.t1 { width: 16px; height: 10px; margin-right: 28px; }
.t2 { width: 24px; height: 18px; margin-right: 12px; }
.t3 { width: 24px; height: 18px; margin-right: 12px; }
.t4 { width: 24px; height: 20px; }
.clock { width: 108px; text-align: right; font-size: 17.200px; letter-spacing: .1px; }
```
